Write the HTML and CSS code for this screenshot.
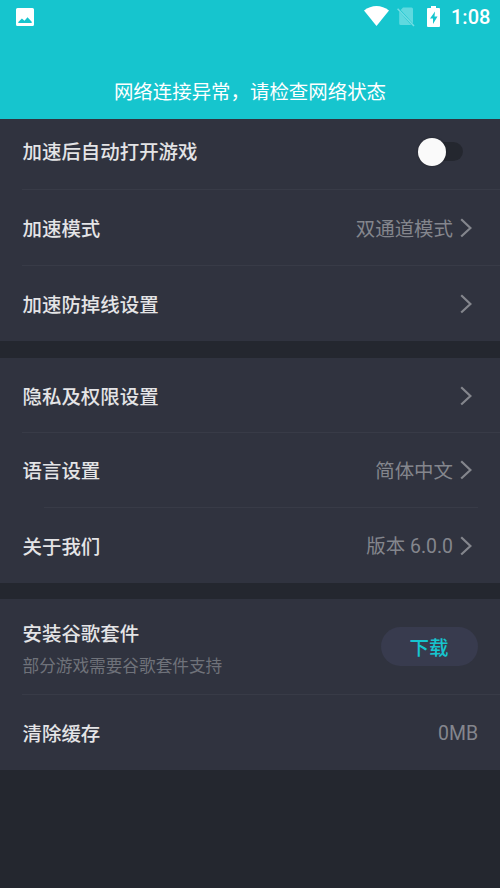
FILE: index.html
```html
<!DOCTYPE html>
<html lang="zh-CN">
<head>
<meta charset="utf-8">
<title>设置</title>
<link rel="stylesheet" href="styles.css">
</head>
<body>
<header class="header">
  <div class="status">
    <svg class="photo" width="18" height="18" viewBox="0 0 18 18"><path fill="#fff" fill-rule="evenodd" d="M1.500 0h15A1.500 1.500 0 0 1 18 1.500v15a1.500 1.500 0 0 1-1.500 1.500h-15A1.500 1.500 0 0 1 0 16.500v-15A1.500 1.500 0 0 1 1.500 0ZM2.300 15h13.400V13.800L11.500 9.200 8.500 12.800 5.900 10.500 2.300 14Z"/></svg>
    <svg class="wifi" width="25" height="20" viewBox="0 0 25 20"><path fill="#fff" d="M0 4.500C7.500-1.500 17.500-1.500 25 4.500L12.500 20Z"/></svg>
    <svg class="sim" width="18" height="21" viewBox="0 0 18 21"><path fill="#5fd9df" d="M6 1.500h8.500A1.500 1.500 0 0 1 16 3v14.500L3.700 4ZM2.200 5.500 14.200 19H3.700a1.500 1.500 0 0 1-1.500-1.500Z"/><path stroke="#73dde3" stroke-width="1.500" d="M.6 2.800 17 20"/></svg>
    <svg class="battery" width="13" height="21" viewBox="0 0 13 21"><path fill="#fff" fill-rule="evenodd" d="M4 0h5v2h3a1 1 0 0 1 1 1v17a1 1 0 0 1-1 1H1a1 1 0 0 1-1-1V3a1 1 0 0 1 1-1h3ZM8 5.500 3 12.500h3V18L10.500 10.500H7.500Z"/></svg>
    <span class="clock">1:08</span>
  </div>
  <div class="notice">网络连接异常，请检查网络状态</div>
</header>
<main>
  <section class="group group-boost">
    <div class="row"><span class="label">加速后自动打开游戏</span><span class="switch"><span class="knob"></span></span></div>
    <div class="row"><span class="label">加速模式</span><span class="value">双通道模式</span><svg class="chevron" width="12" height="20" viewBox="0 0 12 20"><path d="M1.200 1.200 10.400 10 1.200 18.500"/></svg></div>
    <div class="row"><span class="label">加速防掉线设置</span><svg class="chevron" width="12" height="20" viewBox="0 0 12 20"><path d="M1.200 1.200 10.400 10 1.200 18.500"/></svg></div>
  </section>
  <section class="group group-general">
    <div class="row"><span class="label">隐私及权限设置</span><svg class="chevron" width="12" height="20" viewBox="0 0 12 20"><path d="M1.200 1.200 10.400 10 1.200 18.500"/></svg></div>
    <div class="row"><span class="label">语言设置</span><span class="value">简体中文</span><svg class="chevron" width="12" height="20" viewBox="0 0 12 20"><path d="M1.200 1.200 10.400 10 1.200 18.500"/></svg></div>
    <div class="row row-about"><span class="label">关于我们</span><span class="value value-latin">版本 6.0.0</span><svg class="chevron" width="12" height="20" viewBox="0 0 12 20"><path d="M1.200 1.200 10.400 10 1.200 18.500"/></svg></div>
  </section>
  <section class="group group-tools">
    <div class="row row-install">
      <div class="label"><div class="title">安装谷歌套件</div><div class="hint">部分游戏需要谷歌套件支持</div></div>
      <button class="download">下载</button>
    </div>
    <div class="row row-cache"><span class="label">清除缓存</span><span class="value value-latin">0MB</span></div>
  </section>
</main>
</body>
</html>
```
FILE: styles.css
```css
* { box-sizing: border-box; }

body {
  margin: 0;
  min-height: 888px;
  background: #24272f;
  color: #e4e4e6;
  font-family: "Noto Sans CJK SC", sans-serif;
  font-size: 19.440px;
  line-height: 28px;
}

svg { display: block; flex: none; }

.header {
  height: 119px;
  background: #16c5ce;
  color: #fff;
}

.status {
  display: flex;
  align-items: flex-start;
  height: 77px;
  padding: 6px 11px 0 16px;
}

.photo { margin-top: 2px; }
.wifi { margin-left: auto; }
.sim { margin-left: 8px; }
.battery { margin-left: 12px; }

.clock {
  margin-left: 11px;
  width: 38px;
  font: 500 20px/23px Roboto, sans-serif;
  white-space: nowrap;
}

.notice { text-align: center; }

.group {
  margin-bottom: 17px;
  background: #30333f;
}

.row {
  position: relative;
  display: flex;
  align-items: center;
  height: 76px;
  padding: 2px 28px 0 22.500px;
}

.row + .row::before {
  content: "";
  position: absolute;
  top: 0;
  left: 22px;
  right: 0;
  height: 1px;
  background: #383b47;
}

.group-boost .row:first-child { height: 70px; padding: 0 37.500px 5px 22.500px; }
.group-boost .row:first-child .label { margin-top: -1px; }
.group-general .row { height: 75px; padding-top: 1px; }
.group-general .row:first-child { height: 74px; }
.group-general .row-about { height: 76px; }
.group-general .row-about::before { left: 44px; right: 22px; }
.group-general { margin-bottom: 16px; }

.label { flex: 1; font-weight: 500; }

.value { color: #84868d; }

.value-latin {
  padding-top: 2px;
  font-family: Roboto, "Noto Sans CJK SC", sans-serif;
}

.chevron { margin-left: 7px; }

.chevron path {
  fill: none;
  stroke: #84868d;
  stroke-width: 2.200;
}

.switch {
  display: flex;
  align-items: center;
  width: 45px;
  height: 19px;
  border-radius: 10px;
  background: linear-gradient(to right, transparent 14px, #24272f 14px);
}

.knob {
  width: 28px;
  height: 28px;
  flex: none;
  border-radius: 50%;
  background: #fafafa;
  box-shadow: 0 0 2px #20222a;
}

.group-tools .row-install { height: 95px; padding: 0 22.500px 0 22.500px; }
.group-tools .row-cache { height: 76px; padding-right: 22px; }

.hint {
  margin-top: 6px;
  color: #6f727a;
  font-size: 16.650px;
  font-weight: 400;
  line-height: 24px;
}

.title { margin-top: 2px; }

.download {
  width: 97px;
  height: 39px;
  padding: 0;
  border: 0;
  border-radius: 20px;
  background: #383b4e;
  color: #16c5ce;
  font: inherit;
  font-weight: 500;
}
```
